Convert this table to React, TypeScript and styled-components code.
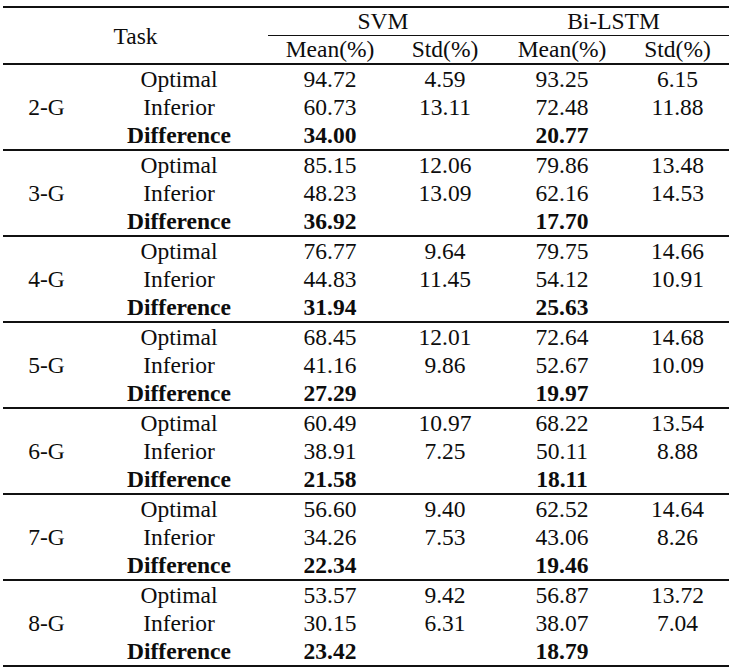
import React from 'react';
import styled, { createGlobalStyle } from 'styled-components';

const GlobalStyle = createGlobalStyle`
  html, body {
    margin: 0;
    padding: 0;
    background: #ffffff;
  }
  body {
    font-family: 'Liberation Serif', 'Times New Roman', serif;
    color: #0d0d0d;
  }
`;

const Page = styled.div`
  width: 729px;
  padding-top: 6px;
`;

const Table = styled.table`
  margin-left: 3px;
  width: 726px;
  table-layout: fixed;
  border-collapse: separate;
  border-spacing: 0;
  border-top: 2px solid #111;
  font-family: 'Liberation Serif', 'Times New Roman', serif;
  font-size: 23.5px;
  color: #0d0d0d;

  th,
  td {
    font-family: 'Liberation Serif', 'Times New Roman', serif;
    font-size: 23.5px;
  }
`;

const HeadCell = styled.th`
  font-weight: normal;
  text-align: center;
  vertical-align: middle;
  padding: 0;
  height: 27px;
  line-height: 27px;
`;

const GroupHead = styled(HeadCell)`
  border-bottom: 1.5px solid #111;
`;

const SubHead = styled(HeadCell)`
  height: 27px;
  border-bottom: 2px solid #111;
`;

const TaskHead = styled(HeadCell)`
  border-bottom: 2px solid #111;
  padding-top: 2px;
`;

const Cell = styled.td<{ $bottom: boolean; $bold?: boolean }>`
  padding: 0;
  height: 28px;
  line-height: 28px;
  text-align: center;
  vertical-align: middle;
  font-weight: ${({ $bold }) => ($bold ? 'bold' : 'normal')};
  border-bottom: ${({ $bottom }) => ($bottom ? '2px solid #111' : 'none')};
`;

const GroupCell = styled.td<{ $bottom: boolean }>`
  padding: 0;
  text-align: center;
  vertical-align: middle;
  border-bottom: ${({ $bottom }) => ($bottom ? '2px solid #111' : 'none')};
`;

type Group = {
  task: string;
  optimal: [string, string, string, string];
  inferior: [string, string, string, string];
  diff: [string, string];
};

const groups: Group[] = [
  { task: '2-G', optimal: ['94.72', '4.59', '93.25', '6.15'], inferior: ['60.73', '13.11', '72.48', '11.88'], diff: ['34.00', '20.77'] },
  { task: '3-G', optimal: ['85.15', '12.06', '79.86', '13.48'], inferior: ['48.23', '13.09', '62.16', '14.53'], diff: ['36.92', '17.70'] },
  { task: '4-G', optimal: ['76.77', '9.64', '79.75', '14.66'], inferior: ['44.83', '11.45', '54.12', '10.91'], diff: ['31.94', '25.63'] },
  { task: '5-G', optimal: ['68.45', '12.01', '72.64', '14.68'], inferior: ['41.16', '9.86', '52.67', '10.09'], diff: ['27.29', '19.97'] },
  { task: '6-G', optimal: ['60.49', '10.97', '68.22', '13.54'], inferior: ['38.91', '7.25', '50.11', '8.88'], diff: ['21.58', '18.11'] },
  { task: '7-G', optimal: ['56.60', '9.40', '62.52', '14.64'], inferior: ['34.26', '7.53', '43.06', '8.26'], diff: ['22.34', '19.46'] },
  { task: '8-G', optimal: ['53.57', '9.42', '56.87', '13.72'], inferior: ['30.15', '6.31', '38.07', '7.04'], diff: ['23.42', '18.79'] },
];

function GroupRows({ group }: { group: Group }) {
  return (
    <tbody>
      <tr>
        <GroupCell rowSpan={3} $bottom>
          {group.task}
        </GroupCell>
        <Cell $bottom={false}>Optimal</Cell>
        {group.optimal.map((v, i) => (
          <Cell key={i} $bottom={false}>
            {v}
          </Cell>
        ))}
      </tr>
      <tr>
        <Cell $bottom={false}>Inferior</Cell>
        {group.inferior.map((v, i) => (
          <Cell key={i} $bottom={false}>
            {v}
          </Cell>
        ))}
      </tr>
      <tr>
        <Cell $bottom $bold>
          Difference
        </Cell>
        <Cell $bottom $bold>
          {group.diff[0]}
        </Cell>
        <Cell $bottom />
        <Cell $bottom $bold>
          {group.diff[1]}
        </Cell>
        <Cell $bottom />
      </tr>
    </tbody>
  );
}

export default function App() {
  return (
    <Page>
      <GlobalStyle />
      <Table>
        <colgroup>
          <col style={{ width: 87 }} />
          <col style={{ width: 178 }} />
          <col style={{ width: 124 }} />
          <col style={{ width: 106 }} />
          <col style={{ width: 128 }} />
          <col style={{ width: 103 }} />
        </colgroup>
        <thead>
          <tr>
            <TaskHead rowSpan={2} colSpan={2}>
              Task
            </TaskHead>
            <GroupHead colSpan={2}>SVM</GroupHead>
            <GroupHead colSpan={2}>Bi-LSTM</GroupHead>
          </tr>
          <tr>
            <SubHead>Mean(%)</SubHead>
            <SubHead>Std(%)</SubHead>
            <SubHead>Mean(%)</SubHead>
            <SubHead>Std(%)</SubHead>
          </tr>
        </thead>
        {groups.map((g) => (
          <GroupRows key={g.task} group={g} />
        ))}
      </Table>
    </Page>
  );
}
